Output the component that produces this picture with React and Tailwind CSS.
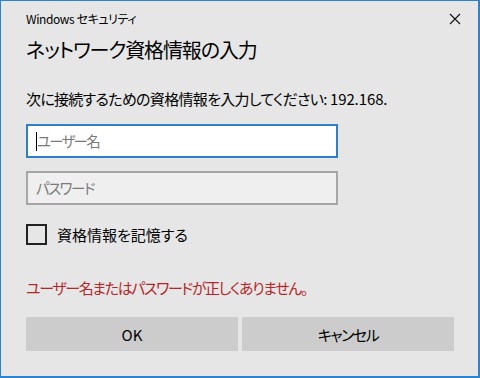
import React from "react";

const JP = { fontFamily: '"Noto Sans CJK JP", "Noto Sans", sans-serif', fontFeatureSettings: '"palt"' };

export default function App() {
  return (
    <div
      className="w-[480px] h-[378px] bg-[#e6e6e6] border border-[#2a84d2] border-r-2 border-b-2 box-border flex flex-col text-black"
      style={JP}
    >
      <div className="h-[35px] flex items-center justify-between pl-[25px] pr-[16px]">
        <span className="text-[12px] leading-none tracking-[-0.4px]">Windows セキュリティ</span>
        <svg width="12" height="12" viewBox="0 0 12 12" className="mr-[1px]">
          <path d="M1 1L11 11M11 1L1 11" stroke="#111" strokeWidth="1.1" />
        </svg>
      </div>
      <div className="h-[28px] flex items-center pl-[25px] text-[20px] leading-none tracking-[-1.1px]">
        ネットワーク資格情報の入力
      </div>
      <div className="mt-[24px] h-[20px] flex items-center pl-[25px] text-[15px] leading-none whitespace-pre">
        <span className="tracking-[-0.7px]">次に接続するための資格情報を入力してください:</span>
        <span className="tracking-[-0.1px]"> 192.168.</span>
      </div>
      <div className="mt-[16px] ml-[25px] w-[312px] h-[34px] bg-white border-2 border-[#2f7fc8] flex items-center pl-[8px] box-border">
        <span className="w-px h-[19px] bg-black" />
        <span className="text-[14.5px] leading-none text-[#7a7a7a] tracking-[-1.8px]">ユーザー名</span>
      </div>
      <div className="mt-[13px] ml-[25px] w-[312px] h-[34px] bg-[#efefef] border-2 border-[#a6a6a6] flex items-center pl-[8px] box-border">
        <span className="text-[14.5px] leading-none text-[#7a7a7a] tracking-[-1.5px]">パスワード</span>
      </div>
      <div className="mt-[18px] ml-[25px] flex items-center h-[22px]">
        <span className="w-[21px] h-[21px] border-2 border-[#222] box-border" />
        <span className="ml-[10px] text-[15px] leading-none">資格情報を記憶する</span>
      </div>
      <div className="mt-[32px] h-[20px] flex items-center pl-[25px] text-[15px] leading-none text-[#b3262a] tracking-[-1.4px]">
        ユーザー名またはパスワードが正しくありません。
      </div>
      <div className="mt-[20px] ml-[25px] flex gap-[4px]">
        <div className="w-[212px] h-[34px] bg-[#cccccc] flex items-center justify-center text-[15px] leading-none">
          OK
        </div>
        <div className="w-[212px] h-[34px] bg-[#cccccc] flex items-center justify-center text-[15px] leading-none tracking-[-1.5px]">
          キャンセル
        </div>
      </div>
    </div>
  );
}
